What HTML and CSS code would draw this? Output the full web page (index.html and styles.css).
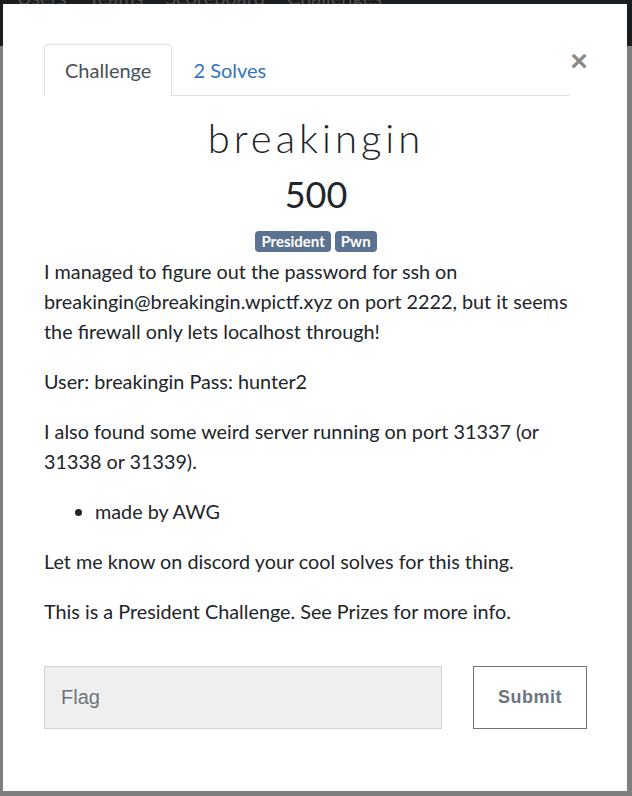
FILE: index.html
```html
<!DOCTYPE html>
<html>
<head>
<meta charset="utf-8">
<link rel="stylesheet" href="styles.css">
</head>
<body>
<nav class="navbar">
  <a class="nav-link">Users</a>
  <a class="nav-link">Teams</a>
  <a class="nav-link">Scoreboard</a>
  <a class="nav-link">Challenges</a>
</nav>
<div class="backdrop"></div>
<div class="modal">
  <div class="modal-body">
    <div class="header">
      <ul class="tabs">
        <li class="tab active">Challenge</li>
        <li class="tab link">2 Solves</li>
      </ul>
      <button class="close">×</button>
    </div>
    <h2 class="title">breakingin</h2>
    <h3 class="value">500</h3>
    <div class="tags">
      <span class="badge">President</span>
      <span class="badge">Pwn</span>
    </div>
    <div class="desc">
      <p>I managed to figure out the password for ssh on breakingin@breakingin.wpictf.xyz on port 2222, but it seems the firewall only lets localhost through!</p>
      <p>User: breakingin Pass: hunter2</p>
      <p>I also found some weird server running on port 31337 (or 31338 or 31339).</p>
      <ul class="list">
        <li>made by AWG</li>
      </ul>
      <p>Let me know on discord your cool solves for this thing.</p>
      <p>This is a President Challenge. See Prizes for more info.</p>
    </div>
    <div class="submit-row">
      <input class="flag" type="text" placeholder="Flag">
      <button class="submit">Submit</button>
    </div>
  </div>
</div>
</body>
</html>
```

FILE: styles.css
```css
html, body {
  margin: 0;
  padding: 0;
}
body {
  background: #fff;
  font-family: "Lato", "Liberation Sans", sans-serif;
  width: 632px;
  height: 796px;
  overflow: hidden;
}
.navbar {
  height: 46px;
  background: #343a40;
  display: flex;
  gap: 22px;
  padding-left: 17px;
  font-size: 20px;
  line-height: 20px;
}
.nav-link {
  color: rgba(255, 255, 255, 0.5);
  margin-top: -13px;
  font-family: "Lato", sans-serif;
}
.backdrop {
  position: fixed;
  inset: 0;
  background: rgba(0, 0, 0, 0.5);
}
.modal {
  position: fixed;
  left: 3px;
  top: 4px;
  width: 624px;
  height: 787px;
  background: #fff;
  box-sizing: border-box;
}
.modal-body {
  padding: 40px 39px 0 41px;
  color: #212529;
}
.header {
  display: flex;
  align-items: flex-start;
}
.tabs {
  list-style: none;
  margin: 0;
  padding: 0;
  display: flex;
  width: 526px;
  border-bottom: 1px solid #dee2e6;
}
.tab {
  padding: 12px 20px;
  font-size: 20px;
  line-height: 26px;
  border: 1px solid transparent;
  border-top-left-radius: 4px;
  border-top-right-radius: 4px;
  margin-bottom: -1px;
}
.tab.active {
  color: #495057;
  border-color: #dee2e6 #dee2e6 #fff;
  background: #fff;
}
.tab.link {
  color: #3275b8;
}
.close {
  margin-left: auto;
  margin-top: 2px;
  background: none;
  border: 0;
  padding: 0;
  width: 18px;
  font-family: "Liberation Sans", sans-serif;
  font-weight: 700;
  font-size: 30px;
  line-height: 30px;
  color: #000;
  opacity: 0.46;
}
.title {
  margin: 18px 0 0;
  text-align: center;
  font-weight: 300;
  font-size: 40px;
  line-height: 48px;
  letter-spacing: 4px;
  color: #212529;
}
.value {
  margin: 12px 0 0;
  text-align: center;
  font-weight: 400;
  font-size: 36px;
  line-height: 40px;
  color: #212529;
}
.tags {
  display: flex;
  justify-content: center;
  gap: 4px;
  margin-top: 17px;
}
.badge {
  background: #5b7290;
  color: #fff;
  font-weight: 700;
  font-size: 15px;
  line-height: 21px;
  padding: 0 6px;
  border-radius: 4px;
}
.desc {
  margin-top: 4px;
  font-size: 19.8px;
  line-height: 30px;
}
.desc p {
  margin: 0 0 20px;
}
.list {
  margin: 0 0 20px;
  padding-left: 51px;
}
.submit-row {
  display: flex;
  gap: 31px;
  margin-top: 40px;
}
.flag {
  width: 398px;
  height: 63px;
  box-sizing: border-box;
  background: #efefef;
  border: 1px solid #ced4da;
  padding: 0 16px;
  font-family: "Liberation Sans", sans-serif;
  font-size: 20px;
  color: #495057;
  outline: none;
}
.flag::placeholder {
  color: #6c757d;
}
.submit {
  width: 114px;
  height: 63px;
  box-sizing: border-box;
  background: #fff;
  border: 1px solid #6c757d;
  color: #6c757d;
  font-family: "Liberation Sans", sans-serif;
  font-weight: 700;
  font-size: 18px;
  letter-spacing: 0.5px;
}
```
